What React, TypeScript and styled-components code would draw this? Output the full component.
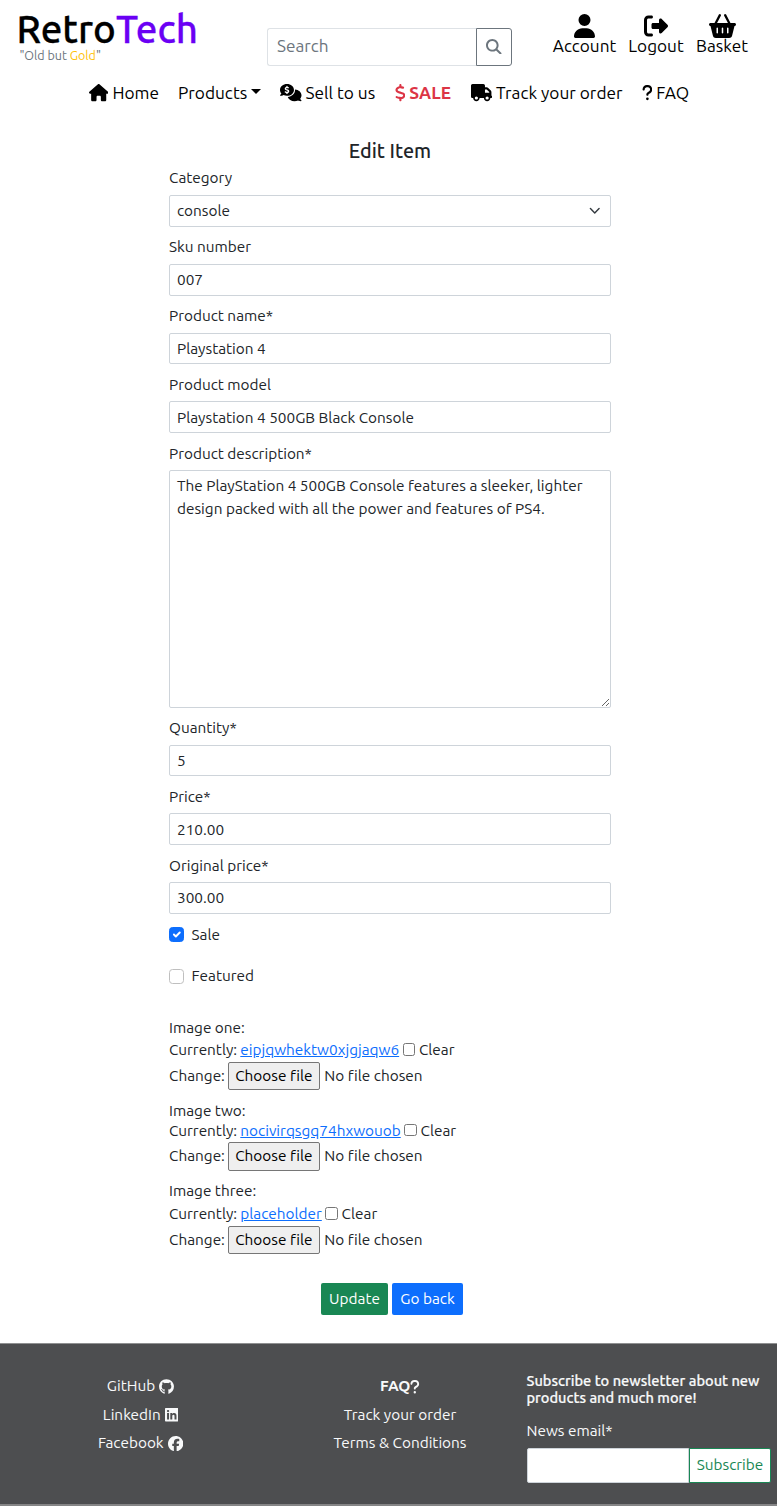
import React from "react";
import styled, { createGlobalStyle } from "styled-components";
import {
  FaHouse, FaCommentsDollar, FaDollarSign, FaTruck, FaQuestion, FaUser,
  FaRightFromBracket, FaBasketShopping, FaMagnifyingGlass, FaGithub,
  FaLinkedin, FaFacebook,
} from "react-icons/fa6";

const Global = createGlobalStyle`
  *, *::before, *::after { box-sizing: border-box; }
  body {
    margin: 0;
    background: #fff;
    color: #212529;
    font-family: Ubuntu, "Noto Sans", sans-serif;
    font-size: 15.35px;
    line-height: 22.5px;
    font-variant-ligatures: none;
  }
  input, select, textarea, button { font: inherit; color: inherit; margin: 0; font-variant-ligatures: none; }
  svg { display: block; flex: none; }
`;

const Text = styled.span`
  white-space: nowrap;
`;

const Header = styled.header`
  display: flex;
  align-items: flex-start;
  height: 74px;
  color: #000;
`;

const Brand = styled.a`
  display: block;
  width: 267px;
  padding: 8px 0 0 16.5px;
`;

const Logo = styled.div`
  font-size: 38.5px;
  line-height: 42px;
  font-weight: 500;
  -webkit-text-stroke: 0.3px currentColor;
`;

const Violet = styled.span`
  color: #6a00f4;
`;

const Tagline = styled.div`
  margin-top: -1px;
  padding-left: 3px;
  font-size: 12.5px;
  line-height: 12px;
  color: #6c757d;
`;

const Gold = styled.span`
  color: #ffc107;
`;

const SearchBar = styled.form`
  display: flex;
  width: 245px;
  height: 38px;
  margin-top: 28px;
`;

const SearchInput = styled.input`
  flex: 1;
  min-width: 0;
  padding: 0 9px 2px;
  border: 1px solid #dee2e6;
  border-right: 0;
  border-radius: 3px 0 0 3px;
  font-size: 17.2px;
  outline: 0;
  &::placeholder { color: #6c757d; opacity: 1; }
`;

const SearchButton = styled.button`
  display: flex;
  align-items: center;
  justify-content: center;
  width: 36px;
  padding: 0 0 1px;
  border: 1px solid #6c757d;
  border-radius: 0 3px 3px 0;
  background: #fff;
  color: #6c757d;
  font-size: 15.5px;
`;

const UserLinks = styled.div`
  display: flex;
  gap: 12px;
  margin: 14px 0 0 41px;
`;

const UserLink = styled.a<{ $width: number; $icon: number }>`
  display: flex;
  flex-direction: column;
  align-items: center;
  width: ${(p) => p.$width}px;
  font-size: 17.2px;
  line-height: 15px;
  svg { height: 24px; width: ${(p) => p.$icon}px; }
`;

const Nav = styled.nav`
  display: flex;
  height: 38px;
  align-items: center;
  padding-left: 89px;
  font-size: 17.25px;
  color: #000;
`;

const NavLink = styled.a<{ $width: number; $icon?: number; $sale?: boolean }>`
  display: flex;
  align-items: center;
  gap: 4px;
  width: ${(p) => p.$width}px;
  color: ${(p) => (p.$sale ? "#dc3545" : "#000")};
  font-weight: ${(p) => (p.$sale ? 700 : 400)};
  svg { height: 17.25px; width: ${(p) => p.$icon}px; }
`;

const Caret = styled.i`
  border-top: 5px solid #000;
  border-left: 5px solid transparent;
  border-right: 5px solid transparent;
  margin-top: -4px;
`;

const Form = styled.form`
  width: 442px;
  margin: 28px 0 0 169px;
`;

const Title = styled.h1`
  margin: 0 0 5.4px;
  font-size: 19.8px;
  line-height: 22px;
  font-weight: 500;
  text-align: center;
`;

const Field = styled.div`
  display: flex;
  flex-direction: column;
  margin-bottom: 9.55px;
`;

const Label = styled.label`
  height: 27.5px;
`;

const Input = styled.input`
  height: 31.7px;
  padding: 0 7px 0.4px;
  border: 1px solid #ced4da;
  border-radius: 2px;
  background: #fff;
  outline: 0;
`;

const Select = styled.div`
  display: flex;
  align-items: center;
  justify-content: space-between;
  height: 32px;
  padding: 0 10px 0 7px;
  border: 1px solid #ced4da;
  border-radius: 2px;
`;

const Area = styled.textarea`
  display: block;
  height: 237.5px;
  padding: 3px 7px;
  border: 1px solid #ced4da;
  border-radius: 2px;
  line-height: 23px;
  resize: vertical;
  outline: 0;
`;

const Checks = styled.div`
  padding-top: 0.6px;
`;

const CheckRow = styled.label`
  display: flex;
  align-items: center;
  gap: 7.5px;
  height: 22px;
  margin-bottom: 19.1px;
`;

const CheckBox = styled.span<{ $on?: boolean }>`
  display: flex;
  align-items: center;
  justify-content: center;
  width: 15px;
  height: 15px;
  border: 1px solid ${(p) => (p.$on ? "#0d6efd" : "#bfbfbf")};
  border-radius: 3.5px;
  background: ${(p) => (p.$on ? "#0d6efd" : "#fff")};
`;

const Images = styled.div`
  margin-top: 29.7px;
`;

const ImageBlock = styled.div`
  margin-bottom: 9.5px;
`;

const ImageTitle = styled.div<{ $height: number }>`
  height: ${(p) => p.$height}px;
`;

const ImageLine = styled.div`
  display: flex;
  align-items: center;
  height: 23px;
`;

const ImageLink = styled.a`
  margin: 0 3.5px 0 3.2px;
  color: #0d6efd;
  text-decoration: underline;
`;

const ClearBox = styled.span`
  width: 12.5px;
  height: 12.5px;
  margin: -2px 3.8px 0 0;
  border: 1px solid #767676;
  border-radius: 2.5px;
  background: #fff;
`;

const ChangeLine = styled.div`
  display: flex;
  align-items: center;
  height: 28.5px;
`;

const FileButton = styled.button`
  width: 92px;
  height: 28.5px;
  margin: 0 4.3px 0 3px;
  padding: 0;
  border: 1px solid #767676;
  border-radius: 2px;
  background: #efefef;
  color: #000;
  white-space: nowrap;
`;

const Actions = styled.div`
  display: flex;
  gap: 4px;
  margin: 28.5px 0 0 152px;
`;

const Action = styled.button<{ $bg: string; $width: number }>`
  width: ${(p) => p.$width}px;
  height: 32.3px;
  padding: 0;
  border: 0;
  border-radius: 2px;
  background: ${(p) => p.$bg};
  color: #fff;
`;

const Footer = styled.footer`
  display: flex;
  height: 163px;
  margin-top: 28px;
  background: #4d4e50;
  border-top: 1px solid #8f9091;
  border-bottom: 2px solid #858586;
  color: #f8f9fa;
`;

const LinkColumn = styled.div<{ $width: number }>`
  display: flex;
  flex-direction: column;
  align-items: center;
  width: ${(p) => p.$width}px;
  padding-top: 28px;
`;

const FooterLink = styled.a<{ $icon?: number; $gap?: number }>`
  display: flex;
  align-items: center;
  gap: ${(p) => p.$gap ?? 4}px;
  height: 28.6px;
  svg { height: 15.4px; width: ${(p) => p.$icon ?? 15}px; }
`;

const Bold = styled.b`
  font-weight: 700;
`;

const Newsletter = styled.div`
  padding: 27.5px 0 0 7.5px;
`;

const NewsTitle = styled.div`
  font-size: 14.6px;
  line-height: 17px;
  font-weight: 500;
  white-space: nowrap;
  -webkit-text-stroke: 0.2px currentColor;
`;

const NewsLabel = styled.div`
  margin: 14px 0 6px;
`;

const NewsRow = styled.div`
  display: flex;
  height: 35px;
`;

const NewsInput = styled.input`
  width: 162.5px;
  border: 1px solid #ced4da;
  border-radius: 2px 0 0 2px;
  background: #fff;
`;

const NewsButton = styled.button`
  width: 82px;
  padding: 0;
  border: 1px solid #198754;
  border-radius: 0 2px 2px 0;
  background: #fff;
  color: #198754;
`;

type FieldProps = { label: string; value: string };
const TextField = ({ label, value }: FieldProps) => (
  <Field>
    <Label>{label}</Label>
    <Input defaultValue={value} />
  </Field>
);

type ImageProps = { title: string; link: string; height: number };
const ImageField = ({ title, link, height }: ImageProps) => (
  <ImageBlock>
    <ImageTitle $height={height}>{title}</ImageTitle>
    <ImageLine>
      <Text>Currently:</Text>
      <ImageLink>{link}</ImageLink>
      <ClearBox />
      <Text>Clear</Text>
    </ImageLine>
    <ChangeLine>
      <Text>Change:</Text>
      <FileButton type="button">Choose file</FileButton>
      <Text>No file chosen</Text>
    </ChangeLine>
  </ImageBlock>
);

export default function App() {
  return (
    <>
      <Global />
      <Header>
        <Brand>
          <Logo>Retro<Violet>Tech</Violet></Logo>
          <Tagline>"Old but <Gold>Gold</Gold>"</Tagline>
        </Brand>
        <SearchBar>
          <SearchInput placeholder="Search" />
          <SearchButton type="button"><FaMagnifyingGlass /></SearchButton>
        </SearchBar>
        <UserLinks>
          <UserLink $width={63} $icon={21}><FaUser /><Text>Account</Text></UserLink>
          <UserLink $width={56} $icon={24}><FaRightFromBracket /><Text>Logout</Text></UserLink>
          <UserLink $width={52} $icon={27}><FaBasketShopping /><Text>Basket</Text></UserLink>
        </UserLinks>
      </Header>
      <Nav>
        <NavLink $width={89} $icon={19.4}><FaHouse /><Text>Home</Text></NavLink>
        <NavLink $width={102}><Text>Products</Text><Caret /></NavLink>
        <NavLink $width={114.5} $icon={21.5}><FaCommentsDollar /><Text>Sell to us</Text></NavLink>
        <NavLink $width={76} $icon={10.8} $sale><FaDollarSign /><Text>SALE</Text></NavLink>
        <NavLink $width={171} $icon={21.5}><FaTruck /><Text>Track your order</Text></NavLink>
        <NavLink $width={50} $icon={10.8}><FaQuestion /><Text>FAQ</Text></NavLink>
      </Nav>
      <Form>
        <Title>Edit Item</Title>
        <Field>
          <Label>Category</Label>
          <Select>
            <Text>console</Text>
            <svg width="11.5" height="11.5" viewBox="0 0 16 16" fill="none" stroke="#343a40" strokeWidth="2" strokeLinecap="round" strokeLinejoin="round">
              <path d="m2 5 6 6 6-6" />
            </svg>
          </Select>
        </Field>
        <TextField label="Sku number" value="007" />
        <TextField label="Product name*" value="Playstation 4" />
        <TextField label="Product model" value="Playstation 4 500GB Black Console" />
        <Field>
          <Label>Product description*</Label>
          <Area defaultValue={"The PlayStation 4 500GB Console features a sleeker, lighter design packed with all the power and features of PS4."} />
        </Field>
        <TextField label="Quantity*" value="5" />
        <TextField label="Price*" value="210.00" />
        <TextField label="Original price*" value="300.00" />
        <Checks>
          <CheckRow>
            <CheckBox $on>
              <svg width="13" height="13" viewBox="0 0 20 20" fill="none" stroke="#fff" strokeWidth="3" strokeLinecap="round" strokeLinejoin="round">
                <path d="m6 10 3 3 6-6" />
              </svg>
            </CheckBox>
            <Text>Sale</Text>
          </CheckRow>
          <CheckRow><CheckBox /><Text>Featured</Text></CheckRow>
        </Checks>
        <Images>
          <ImageField title="Image one:" link="eipjqwhektw0xjgjaqw6" height={22} />
          <ImageField title="Image two:" link="nocivirqsgq74hxwouob" height={19.5} />
          <ImageField title="Image three:" link="placeholder" height={22.5} />
        </Images>
        <Actions>
          <Action type="button" $bg="#198754" $width={67}>Update</Action>
          <Action type="button" $bg="#0d6efd" $width={71}>Go back</Action>
        </Actions>
      </Form>
      <Footer>
        <LinkColumn $width={281}>
          <FooterLink><Text>GitHub</Text><FaGithub /></FooterLink>
          <FooterLink $icon={13.4}><Text>LinkedIn</Text><FaLinkedin /></FooterLink>
          <FooterLink $icon={15.4}><Text>Facebook</Text><FaFacebook /></FooterLink>
        </LinkColumn>
        <LinkColumn $width={238}>
          <FooterLink $icon={9.6} $gap={0}><Bold>FAQ</Bold><FaQuestion /></FooterLink>
          <FooterLink><Text>Track your order</Text></FooterLink>
          <FooterLink><Text>Terms &amp; Conditions</Text></FooterLink>
        </LinkColumn>
        <Newsletter>
          <NewsTitle>Subscribe to newsletter about new<br />products and much more!</NewsTitle>
          <NewsLabel>News email*</NewsLabel>
          <NewsRow>
            <NewsInput />
            <NewsButton type="button">Subscribe</NewsButton>
          </NewsRow>
        </Newsletter>
      </Footer>
    </>
  );
}
